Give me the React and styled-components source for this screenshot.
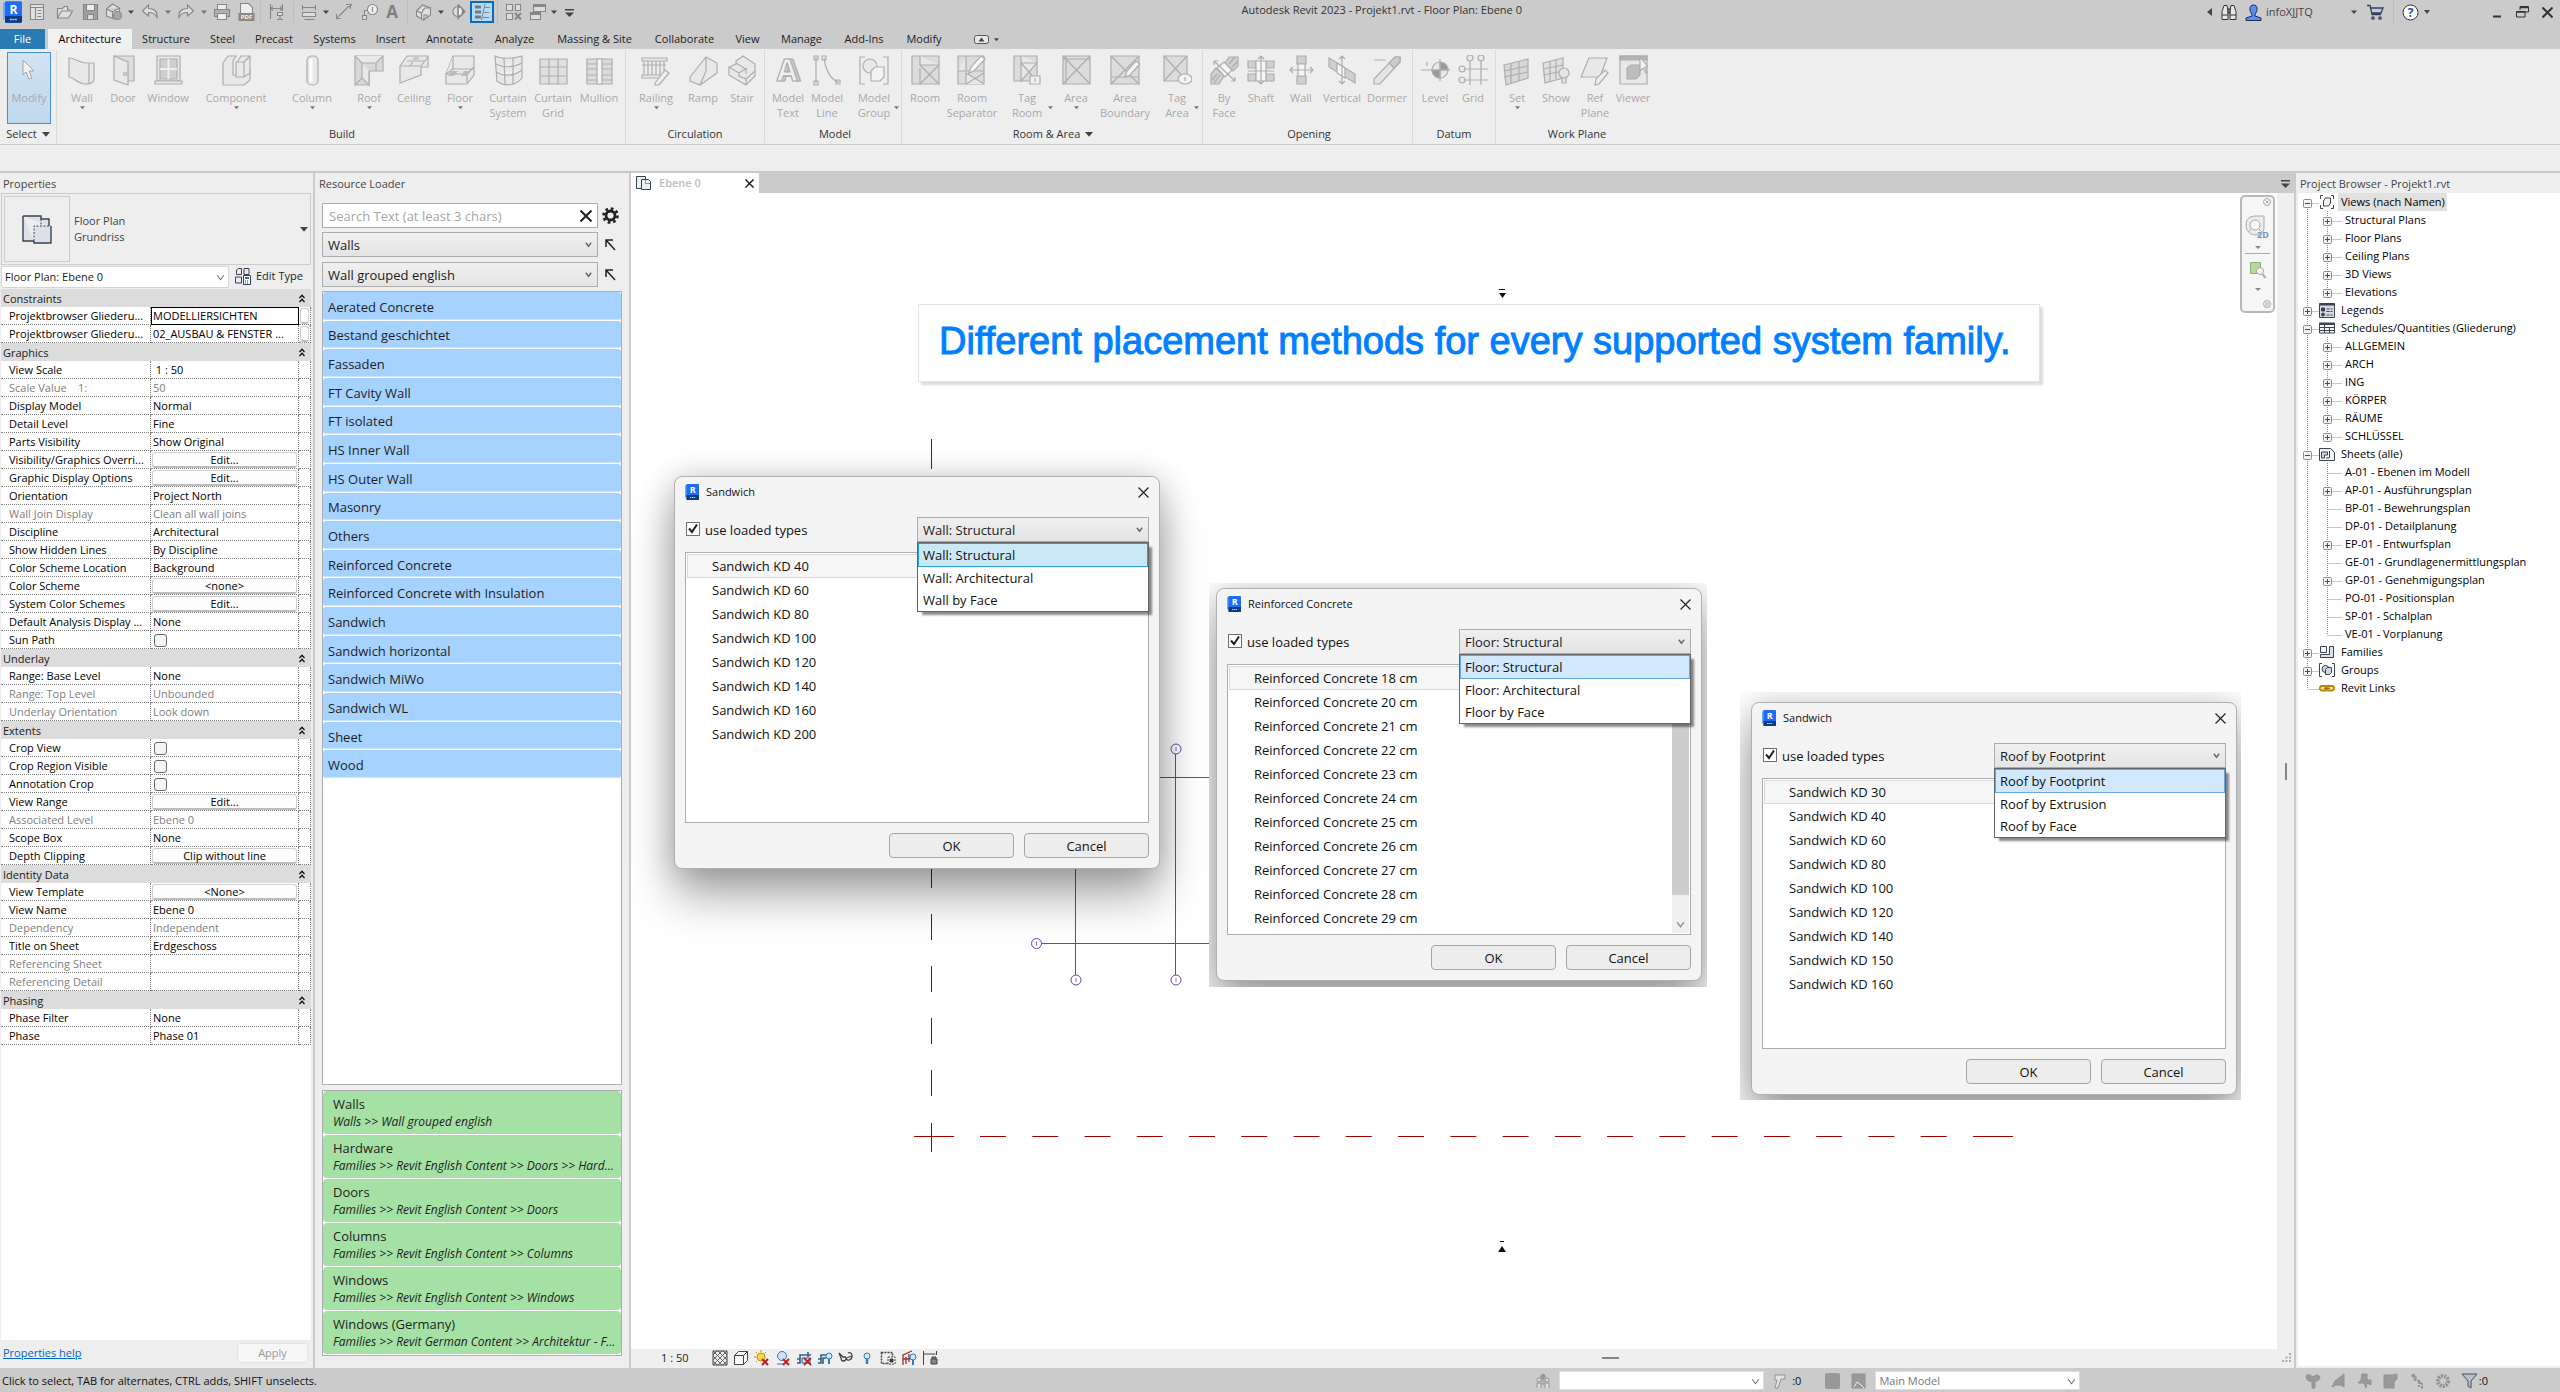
import React from "react";
import styled, { createGlobalStyle, css } from "styled-components";

const GlobalStyle = createGlobalStyle`
  * {
    box-sizing: border-box;
  }
  html, body, #root {
    height: 100%;
  }
  body {
    margin: 0;
    overflow: hidden;
    background: #eeeeee;
    color: #1e1e1e;
    font-family: "Open Sans", "Noto Sans", sans-serif;
    font-size: 11px;
    line-height: 16px;
  }
  button, input, select {
    font: inherit;
    color: inherit;
    margin: 0;
    padding: 0;
  }
  button {
    border: 0;
    background: none;
  }
  ul {
    list-style: none;
    margin: 0;
    padding: 0;
  }
  h1, h2, p {
    margin: 0;
    font-size: inherit;
    font-weight: normal;
  }
  svg {
    display: block;
    flex: none;
  }
`;

/* ---------- data ---------- */

const tabs = [
  ["Structure", 68], ["Steel", 45], ["Precast", 58], ["Systems", 63],
  ["Insert", 49], ["Annotate", 69], ["Analyze", 61], ["Massing & Site", 99],
  ["Collaborate", 81], ["View", 45], ["Manage", 63], ["Add-Ins", 62], ["Modify", 58],
];

const ribbonPanels = [
  {
    title: "Build", pad: 5,
    tools: [
      ["wall", "Wall", 40, "down"], ["door", "Door", 42], ["window", "Window", 48],
      ["component", "Component", 88, "down"], ["column", "Column", 64, "down"],
      ["roof", "Roof", 50, "down"], ["ceiling", "Ceiling", 40], ["floor", "Floor", 52, "down"],
      ["curtain", "Curtain System", 44], ["curtainGrid", "Curtain Grid", 46], ["mullion", "Mullion", 46],
    ],
    end: 3,
  },
  { title: "Circulation", pad: 5, tools: [["railing", "Railing", 50, "down"], ["ramp", "Ramp", 44], ["stair", "Stair", 34]], end: 5 },
  { title: "Model", pad: 4, tools: [["modelText", "Model Text", 38], ["modelLine", "Model Line", 40], ["modelGroup", "Model Group", 54, "side"]], end: 0 },
  {
    title: "Room & Area", pad: 3, menu: true,
    tools: [
      ["room", "Room", 40], ["roomSep", "Room Separator", 54], ["tagRoom", "Tag Room", 56, "side"],
      ["area", "Area", 42, "down"], ["areaBoundary", "Area Boundary", 56], ["tagArea", "Tag Area", 48, "side"],
    ],
    end: 1,
  },
  {
    title: "Opening", pad: 3,
    tools: [["byFace", "By Face", 36], ["shaft", "Shaft", 38], ["openWall", "Wall", 42], ["vertical", "Vertical", 40], ["dormer", "Dormer", 50]],
    end: 0,
  },
  { title: "Datum", pad: 3, tools: [["level", "Level", 38], ["grid", "Grid", 38]], end: 3 },
  { title: "Work Plane", pad: 4, last: true, tools: [["set", "Set", 34, "down"], ["show", "Show", 44], ["refPlane", "Ref Plane", 34], ["viewer", "Viewer", 42]], end: 3 },
];

const propertyGroups = [
  ["Constraints", [
    ["Projektbrowser Gliederu...", "MODELLIERSICHTEN", "focus"],
    ["Projektbrowser Gliederu...", "02_AUSBAU & FENSTER ...", "more"],
  ]],
  ["Graphics", [
    ["View Scale", "\u00a01 : 50"],
    ["Scale Value \u00a0 \u00a01:", "50", "off"],
    ["Display Model", "Normal"],
    ["Detail Level", "Fine"],
    ["Parts Visibility", "Show Original"],
    ["Visibility/Graphics Overri...", "Edit...", "button"],
    ["Graphic Display Options", "Edit...", "button"],
    ["Orientation", "Project North"],
    ["Wall Join Display", "Clean all wall joins", "off"],
    ["Discipline", "Architectural"],
    ["Show Hidden Lines", "By Discipline"],
    ["Color Scheme Location", "Background"],
    ["Color Scheme", "<none>", "button"],
    ["System Color Schemes", "Edit...", "button"],
    ["Default Analysis Display ...", "None"],
    ["Sun Path", "", "check"],
  ]],
  ["Underlay", [
    ["Range: Base Level", "None"],
    ["Range: Top Level", "Unbounded", "off"],
    ["Underlay Orientation", "Look down", "off"],
  ]],
  ["Extents", [
    ["Crop View", "", "check"],
    ["Crop Region Visible", "", "check"],
    ["Annotation Crop", "", "check"],
    ["View Range", "Edit...", "button"],
    ["Associated Level", "Ebene 0", "off"],
    ["Scope Box", "None"],
    ["Depth Clipping", "Clip without line", "button"],
  ]],
  ["Identity Data", [
    ["View Template", "<None>", "button"],
    ["View Name", "Ebene 0"],
    ["Dependency", "Independent", "off"],
    ["Title on Sheet", "Erdgeschoss"],
    ["Referencing Sheet", "", "off"],
    ["Referencing Detail", "", "off"],
  ]],
  ["Phasing", [
    ["Phase Filter", "None"],
    ["Phase", "Phase 01"],
  ]],
];

const wallGroups = [
  "Aerated Concrete", "Bestand geschichtet", "Fassaden", "FT Cavity Wall", "FT isolated",
  "HS Inner Wall", "HS Outer Wall", "Masonry", "Others", "Reinforced Concrete",
  "Reinforced Concrete with Insulation", "Sandwich", "Sandwich horizontal", "Sandwich MiWo",
  "Sandwich WL", "Sheet", "Wood",
];

const favourites = [
  ["Walls", "Walls >> Wall grouped english"],
  ["Hardware", "Families >> Revit English Content >> Doors >> Hard..."],
  ["Doors", "Families >> Revit English Content >> Doors"],
  ["Columns", "Families >> Revit English Content >> Columns"],
  ["Windows", "Families >> Revit English Content >> Windows"],
  ["Windows (Germany)", "Families >> Revit German Content >> Architektur - F..."],
];

const browserTree = [
  { label: "Views (nach Namen)", icon: "views", open: true, selected: true, items: ["+Structural Plans", "+Floor Plans", "+Ceiling Plans", "+3D Views", "+Elevations"] },
  { label: "Legends", icon: "legends" },
  { label: "Schedules/Quantities (Gliederung)", icon: "schedules", open: true, items: ["+ALLGEMEIN", "+ARCH", "+ING", "+KÖRPER", "+RÄUME", "+SCHLÜSSEL"] },
  {
    label: "Sheets (alle)", icon: "sheets", open: true,
    items: [
      "A-01 - Ebenen im Modell", "+AP-01 - Ausführungsplan", "BP-01 - Bewehrungsplan",
      "DP-01 - Detailplanung", "+EP-01 - Entwurfsplan", "GE-01 - Grundlagenermittlungsplan",
      "+GP-01 - Genehmigungsplan", "PO-01 - Positionsplan", "SP-01 - Schalplan", "VE-01 - Vorplanung",
    ],
  },
  { label: "Families", icon: "families" },
  { label: "Groups", icon: "groups" },
  { label: "Revit Links", icon: "links", leaf: true },
];

const sandwichTypes = (sizes) => sizes.map((s) => `Sandwich KD ${s}`);
const concreteTypes = [18, 20, 21, 22, 23, 24, 25, 26, 27, 28, 29].map((s) => `Reinforced Concrete ${s} cm`);

/* ---------- icons ---------- */

const Caret = ({ size = 6, color = "#444" }) => (
  <svg width={size} height={size} viewBox="0 0 6 6"><path d="M0 1.5h6L3 5z" fill={color} /></svg>
);

const Chevron = ({ size = 8, color = "#666", width = 1.4 }) => (
  <svg width={size} height={size} viewBox="0 0 8 8"><path d="M1 2l3 4 3-4" fill="none" stroke={color} strokeWidth={width} /></svg>
);

const Cross = ({ size = 11, width = 1.2, color = "#222" }) => (
  <svg width={size} height={size} viewBox="0 0 11 11"><path d="M.5.5l10 10M10.5.5l-10 10" stroke={color} strokeWidth={width} /></svg>
);

const RevitLogo = ({ width = 14, height = 16 }) => (
  <svg width={width} height={height} viewBox="0 0 14 16">
    <path d="M0 1.5L2 0v12L0 14z" fill="#6fa8ff" />
    <rect x="1.5" width="12.5" height="16" rx="1" fill="#1c6cf5" />
    <path d="M1.5 11H14v4.2a.8.8 0 0 1-.8.8H1.5z" fill="#0b3a86" />
    <text x="7.7" y="9.2" textAnchor="middle" fontSize="9" fontWeight="bold" fill="#fff">R</text>
    <path d="M5 13.5h5.5" stroke="#b9ccee" strokeWidth="1.2" strokeDasharray="1.4 .5" />
  </svg>
);

const ribbonArt = {
  wall: <path d="M2 3c6 0 10 5 18 5h7v17c-1 3-4 4-8 4C10 29 7 22 2 22zM22 8v21" />,
  door: <><path d="M6 1h20v25h-6" fill="#ddd" /><path d="M6 1l14 6v23L6 25z" /><circle cx="17" cy="19" r="1.5" /></>,
  window: <><path d="M4 1h23v25H4z" /><path d="M7 4h17v20H7z" fill="#cfcfcf" /><path d="M15.5 4v20M7 14h17" stroke="#eee" strokeWidth="2" /><path d="M2 26h27v3H2z" /></>,
  component: <><path d="M2 8l5-7h8l-3 5v14h10l7-5v10l-6 5H2z" /><path d="M16 7l4-6h9v17l-6 4h-8V7zM23 7v15M23 7l6-6M16 7h7" /></>,
  column: <><rect x="10" y="1" width="11" height="29" rx="4.5" /><path d="M14 4v23" stroke="#fff" strokeWidth="3" /></>,
  roof: <><path d="M1 1h28v15H15v14H1z" fill="#d8d8d8" /><path d="M1 1l7 7h14l7-7M8 8v15l7 7V16M8 23l-7 7M22 8v8" /></>,
  ceiling: <><path d="M1 11L8 1h21v11H22v8L1 28z" /><path d="M1 11h21l7-9M8 6h17M11 11l6-9" /><path d="M12 7h6l3-5h-6z" fill="#ccc" stroke="none" /></>,
  floor: <><path d="M1 19L8 1h21v19l-7 9H1z" /><path d="M1 19h21v10M8 1v13L1 19M22 19l7-7M8 14h20" /><path d="M6 16h7l-4 5H3zM16 21h6l4-5h-7z" fill="#bbb" stroke="none" /></>,
  curtain: <path d="M2 1c6 3 18 3 27 0v22c-6 8-18 9-25 3zM3 9c8 4 18 3 26-1M3 17c8 5 18 4 26-2M11 3l1 26M20 3v26" />,
  curtainGrid: <><path d="M2 4h27v25H2z" fill="#e0e0e0" /><path d="M2 12h27M2 21h27M11 4v25M20 4v25" /></>,
  mullion: <><path d="M3 4h25v25H3z" fill="#dcdcdc" /><path d="M13 4h5v25h-5z" fill="#f4f4f4" /><path d="M3 9h10M3 14h10M3 20h10M3 25h10M18 9h10M18 14h10M18 20h10M18 25h10" /></>,
  railing: <><path d="M1 3h25v3H1zM1 20h20v3H1zM3 6v14M7 6v14M11 6v14M15 6v14M19 6v14M23 6v10M1 10h24" /><path d="M14 28l10-13 4 3-10 12h-4z" fill="#eee" /></>,
  ramp: <path d="M2 22L18 2l11 6v10L12 30l-10-4zM18 2v14L12 30" />,
  stair: <path d="M2 12L9 9V6l7-5 12 8v12l-9 9L2 20zM2 12l10 6v3l7 3v6M9 8l10 6v5M12 18l8-5M19 24l9-8" />,
  modelText: <><text x="17" y="26" textAnchor="middle" fontSize="30" fontWeight="bold" fill="#cfcfcf">A</text><text x="14" y="26" textAnchor="middle" fontSize="30" fontWeight="bold" fill="#f0f0f0">A</text></>,
  modelLine: <path d="M4 2v26M2 1h4v4H2zM2 26h4v4H2zM12 3c2 14 8 23 15 24M10 1h4v4h-4zM24 25h4v4h-4z" fill="none" />,
  modelGroup: <><path d="M6 2H1v27h5M24 2h5v27h-5" fill="none" /><circle cx="11" cy="11" r="7" /><path d="M12 16l4-4h9v10l-4 4h-9z" fill="#f4f4f4" /></>,
  room: <><path d="M2 1h27v28H2z" fill="#dcdcdc" /><path d="M10 1v9h19M10 13v16M10 10l19 19M29 10L10 29" /></>,
  roomSep: <><path d="M1 1h26v28H1z" fill="#dcdcdc" /><path d="M9 1v15H1M9 16h18M9 29V18l18 11M9 29l18-11" /><path d="M12 18l2-6L24 1l4 3-11 12z" fill="#f6f6f6" /></>,
  tagRoom: <><path d="M2 1h23v25H2z" fill="#dcdcdc" /><path d="M9 1v7h16M9 8l16 18M25 8L9 26V8" /><path d="M18 21h10v8H18z" fill="#f2f2f2" /><path d="M23 23v4" /></>,
  area: <><path d="M2 1h27v28H2z" fill="#dcdcdc" /><path d="M2 1l27 28M29 1L2 29M5 1v28M2 4h27" /></>,
  areaBoundary: <><path d="M1 1h28v28H1z" fill="#dcdcdc" /><path d="M1 1l28 28M29 1L1 29M1 22h28" /><path d="M15 22l2-6L26 6l4 3-10 11z" fill="#f6f6f6" /></>,
  tagArea: <><path d="M2 1h23v25H2z" fill="#dcdcdc" /><path d="M2 1l23 25M25 1L2 26" /><ellipse cx="23" cy="24" rx="7" ry="5" fill="#f2f2f2" /><path d="M23 22v4" /></>,
  byFace: <><path d="M2 29V19l5-6 8 8-5 8zM16 8l4-6h9v9l-5 5z" fill="#d0d0d0" /><path d="M8 13l7-6 8 8-7 7z" fill="#f6f6f6" /><path d="M5 6l21 20M5 6h4M5 6v4M26 26h-4M26 26v-4M3 25l5-6M5 28l6-8M20 9l6-7M23 12l6-6" /></>,
  shaft: <><path d="M2 6h8v7H2zM20 6h8v7h-8zM2 19h8v7H2zM20 19h8v7h-8z" fill="#d0d0d0" /><path d="M10 6h10v20H10z" fill="#f6f6f6" /><path d="M15 1v28M12 4l3-3 3 3M12 26l3 3 3-3M2 16h26" /></>,
  openWall: <><path d="M11 1h9v8h-9zM11 21h9v8h-9z" fill="#d0d0d0" /><path d="M12 9h7v12h-7z" fill="#f6f6f6" /><path d="M4 15h23M7 12l-3 3 3 3M24 12l3 3-3 3" /></>,
  vertical: <><path d="M2 3l26 16v9L2 12z" fill="#d0d0d0" /><path d="M10 8l8 5v10l-8-5z" fill="#f6f6f6" /><path d="M15 1v28M12 4l3-3 3 3M12 26l3 3 3-3" /></>,
  dormer: <><path d="M2 29V24L23 2h5v5L8 29z" fill="#e4e4e4" /><path d="M17 8l6-6h5v5l-6 6zM2 5h12" fill="#ccc" /></>,
  level: <><circle cx="20" cy="15" r="8" /><path d="M20 7v8h8a8 8 0 0 0-8-8zM20 15v8a8 8 0 0 1-8-8z" fill="#9a9a9a" /><path d="M1 15h29M20 4v22M7 7v4" /></>,
  grid: <><path d="M12 5v25M23 5v25M6 14h24M6 25h24" /><circle cx="12" cy="3" r="3" /><circle cx="23" cy="3" r="3" /><circle cx="4" cy="14" r="3" /><circle cx="4" cy="25" r="3" /></>,
  set: <><path d="M2 10L26 4v19L4 30z" fill="#d8d8d8" /><path d="M2 16l24-5M2 22l24-5M9 8v20M17 6v20" /></>,
  show: <><path d="M2 8l20-5v20L4 28z" fill="#e0e0e0" /><path d="M2 14l20-4M2 20l20-4M9 7v19M15 5v19" /><circle cx="23" cy="18" r="5" fill="#e6e6e6" /><path d="M21 23h4v5h-4z" /></>,
  refPlane: <><path d="M1 22L9 3h18l-7 19z" /><path d="M15 30l1-6 9-9 3 3-9 11z" fill="#eee" /></>,
  viewer: <><path d="M2 1h27v28H2z" /><path d="M2 1h27v4H2z" fill="#b5b5b5" /><path d="M9 13l4-3h9v10l-4 4H9z" fill="#bdbdbd" /><path d="M22 2v14l3-3 3 5 1-1-2-5h3z" fill="#f6f6f6" /></>,
};

const RibbonIcon = ({ name }) => (
  <svg width="30" height="31" viewBox="0 0 30 31" fill="#e8e8e8" stroke="#adadad" strokeWidth="1.2">{ribbonArt[name]}</svg>
);

const quickArt = {
  ui: <><path d="M2.5 1.5h13v15h-13z" fill="#e2e2e2" /><path d="M2.5 4.5h13M7.5 4.5v12M9.5 7.5h4M9.5 10.5h4M9.5 13.5h4" /></>,
  open: <path d="M1.5 15V5.5h5l2-2h3v3h2M1.5 15l4-7h11l-4 7z" />,
  save: <><path d="M2.5 1.5h14v15h-14z" fill="#a0a0a0" /><path d="M5.5 1.5h8v6h-8z" fill="#eee" /><path d="M6.5 11.5h6v5h-6z" fill="#ddd" /></>,
  sync: <><path d="M1.5 6l6-5 7 4v7l-5 4-8-3zM1.5 6l6 3 7-4M7.5 9v7" /><circle cx="12.5" cy="12.5" r="4" fill="#a8a8a8" /></>,
  undo: <path d="M1.5 8l6-6v3.5c6 0 9 3 8.5 9-2-4-4-5-8.5-5V13z" />,
  redo: <path d="M16.5 8l-6-6v3.5c-6 0-9 3-8.5 9 2-4 4-5 8.5-5V13z" />,
  print: <><path d="M4.5 1.5h9v5h-9z" fill="#eee" /><path d="M1.5 6.5h15v7h-15z" fill="#b0b0b0" /><path d="M4.5 10.5h9v6h-9z" fill="#eee" /></>,
  pdf: <><path d="M3.5.5h8l4 4v13h-12z" fill="#eee" /><path d="M2 10.5h15v7H2z" fill="#8c8c8c" /><text x="9.5" y="16" textAnchor="middle" fontSize="6" fontWeight="bold" fill="#f4f4f4" stroke="none">PDF</text></>,
  align: <path d="M2.5 1v15M14.5 1v7M2.5 5.5h12M5 3.5l-2.5 2L5 7.5M12 3.5l2.5 2L12 7.5M9.5 9.5h5v3h-5zM12 12.5v4M9 16.5h6" />,
  measure: <><path d="M2.5 9.5h13v4h-13z" /><path d="M2.5 2v5M15.5 2v5M2.5 4.5h13M4.5 16.5h10" /></>,
  dim: <path d="M3 14L14 3M1.5 11v4.5H6M11 1.5h4.5V6M1 16l3-3M14 4l3-3" />,
  tag: <><circle cx="12.5" cy="6.5" r="5" fill="#eee" /><path d="M12.5 4v5M7.5 7.5h-3v5M2.5 12.5h4v4h-4z" /></>,
  text: <text x="9" y="15" textAnchor="middle" fontSize="17" fontWeight="bold" fill="#808080" stroke="none">A</text>,
  home: <><path d="M1.5 8l6-6 8 3v7l-7 5-7-4z" /><path d="M1.5 8l5 2 3-5 6 0M6.5 10v6M9 16v-4h3v3" fill="none" /></>,
  section: <><circle cx="9" cy="8.5" r="5" /><path d="M9 1.5l7 7-7 7" fill="#777" /><path d="M9 4a4.5 4.5 0 0 1 0 9z" fill="#eee" /><path d="M9 1.5v15" /></>,
  thin: <><path d="M2 4h6M2 9h6M2 14h6" strokeWidth="3" stroke="#6f7c86" /><path d="M12 1L8.5 17M12 4.5h5M11 9.5h5M10 14.5h6" /></>,
  hidden: <><path d="M1.5 1.5h6v6h-6zM10.5 1.5h5v6h-5zM1.5 10.5h6v6h-6z" /><path d="M10 10l6 6.5M16 10l-6 6.5" strokeWidth="2" /></>,
  windows: <><path d="M4.5 1.5h12v7h-12zM1.5 9.5h10v7h-10z" fill="#ddd" /><path d="M4.5 3h12M1.5 11h10" strokeWidth="2" /></>,
};

const QuickIcon = ({ name }) => (
  <svg width="18" height="18" viewBox="0 0 18 18" fill="#dedede" stroke="#878787" strokeWidth="1.1">{quickArt[name]}</svg>
);

const BarCaret = () => (
  <svg width="9" height="9" viewBox="0 0 9 9"><path d="M0 1h9v1.5H0zM0 4.5h9L4.5 9z" fill="#444" /></svg>
);

const SheetsIcon = ({ size = 30 }) => (
  <svg width={size} height={size} viewBox="0 0 30 30" stroke="#3b4252" fill="#dde0e6">
    <path d="M1 2h18v3h8v7M1 2v25h11" strokeWidth="1.4" />
    <path d="M12 12h17v17H12z" stroke="none" />
    <path d="M19 5v7M12 27V12h17" strokeDasharray="2 1.5" fill="none" />
    <path d="M29 12v17H12v-2" strokeWidth="1.4" fill="none" />
  </svg>
);

const SmallSheetsIcon = () => (
  <svg width="16" height="16" viewBox="0 0 16 16" stroke="#3b4252" fill="#eceef2">
    <path d="M.5 1.5h9v12h-9z" />
    <path d="M5.5 4.5h7l2 2v8h-9z" />
    <path d="M9.5 4.5v4h5" strokeDasharray="1 1" fill="none" />
  </svg>
);

const treeArt = {
  views: <><path d="M4 1.5H1.5V5M12 1.5h2.5V5M4 14.5H1.5V11M12 14.5h2.5V11" /><path d="M4.5 7l2-3h5v5l-2 3h-5z" fill="#f4f4f4" /></>,
  legends: <><path d="M.5 1.5h15v14H.5z" fill="#d5dbe3" /><path d="M.5 2.5h15" strokeWidth="2" /><path d="M2.5 6h3v3h-3z" fill="#3b4252" /><circle cx="4" cy="12.5" r="1.5" fill="#3b4252" /><path d="M7.5 7h6M7.5 9.5h6M7.5 13h6" strokeDasharray="3 1" /></>,
  schedules: <><path d="M.5 3h15v10H.5z" fill="#f4f4f4" /><path d="M.5 4h15" strokeWidth="2" /><path d="M.5 7.5h15M.5 10.5h15M5.5 4v9M10.5 7v6" /></>,
  sheets: <><path d="M.5 2.5h11l4 4v8H.5z" fill="#f4f4f4" /><path d="M2.5 6h6v3h-3v3h-3zM10.5 5v7M7 12h3" fill="#cfd5de" /></>,
  families: <><path d="M1.5 2.5h6v6h-6z" fill="#f4f4f4" /><path d="M10.5 2.5h4v11h-13v-3h9z" fill="#dfe3e8" /></>,
  groups: <><path d="M3 1.5H.5v13H3M13 1.5h2.5v13H13" /><circle cx="6.5" cy="7" r="3.5" fill="#cfd5de" /><path d="M6.5 7.5l2-2h4v5l-2 2h-4z" fill="#cfd5de" /></>,
  links: <><rect x=".8" y="6" width="8" height="4.5" rx="2.2" stroke="#b8860b" strokeWidth="1.8" fill="#ffe27a" /><rect x="7.2" y="6" width="8" height="4.5" rx="2.2" stroke="#b8860b" strokeWidth="1.8" fill="#ffe27a" /><path d="M5 8.2h6" stroke="#6d5200" /></>,
};

const viewArt = {
  detail: <><path d="M1 1h14v14H1z" fill="#eee" /><path d="M1 5l4-4M1 10l9-9M1 15L15 1M6 15l9-9M11 15l4-4M1 11l4 4M1 6l9 9M1 1l14 14M6 1l9 9M11 1l4 4" strokeWidth=".8" /></>,
  cube: <path d="M1.5 5.5l4-4h9v9l-4 4h-9zM1.5 5.5h9v9M10.5 5.5l4-4" fill="#fafafa" />,
  sun: <><circle cx="7" cy="7" r="4" fill="#ffd84a" stroke="#c49300" /><path d="M7 0v2M0 7h2M2 2l1 1M12 2l-1 1M2 12l1-1" stroke="#c49300" /><path d="M8 9l6 6M14 9l-6 6" stroke="#c02020" strokeWidth="2" /></>,
  shadow: <><circle cx="7" cy="6" r="4.5" fill="#cfe2f5" stroke="#3f76ac" /><path d="M2 14h6" stroke="#3f76ac" /><path d="M8 9l6 6M14 9l-6 6" stroke="#c02020" strokeWidth="2" /></>,
  crop: <><path d="M1 13h3V5h11M1 9h3M12 2v5" stroke="#2f5f92" strokeWidth="1.6" fill="none" /><path d="M6 8h8v5H6z" fill="#cfe2f5" stroke="#2f5f92" /><path d="M8 8l7 7M15 8l-7 7" stroke="#c02020" strokeWidth="1.8" /></>,
  cropRegion: <><path d="M1 13h3V5h5M6 14V8h3M1 9h3" stroke="#2f5f92" strokeWidth="1.6" fill="none" /><circle cx="12" cy="6" r="3" fill="#cfe8ff" stroke="#2f7fc0" /><path d="M12 9v5" stroke="#2f7fc0" strokeWidth="2" /></>,
  glasses: <><path d="M1 3l2 5c0 4 5 4 5 0M8 8c1 4 6 2 6-2 0-3-2-4-4-3M1 3l4 4h3M14 6l-6 2" fill="none" strokeWidth="1.3" /></>,
  bulb: <><circle cx="8" cy="6" r="3" fill="#cfe8ff" stroke="#2f7fc0" /><path d="M8 9v5" stroke="#2f7fc0" strokeWidth="2.5" /></>,
  template: <><path d="M1.5 2.5h11v11h-11z" strokeDasharray="2 1" fill="#eee" strokeWidth="1.5" /><path d="M8 7h7v7H8z" fill="#fff" strokeDasharray="2 1" /><path d="M10 9h3v3h-3z" fill="#333" /></>,
  analytic: <><path d="M2 15V5l9-4M5 14V7M8 12V4M2 9h7" stroke="#a03030" fill="none" strokeWidth="1.3" /><circle cx="12" cy="7" r="3" fill="#cfe8ff" stroke="#2f7fc0" /><path d="M12 10v5" stroke="#2f7fc0" strokeWidth="2" /></>,
  constraints: <><path d="M1.5 1v14M1.5 4h12M14.5 1v4" fill="none" /><path d="M9 9h6v5H9zM10 9V7h4v2" fill="#888" /></>,
};

const statusArt = {
  people: <><circle cx="8" cy="3.5" r="2.2" /><circle cx="4" cy="7" r="2" fill="#ddd" /><circle cx="12" cy="7" r="2" fill="#ddd" /><path d="M2 15V10h4v5M10 15v-5h4v5M7 7h2v4H7z" fill="#ddd" /></>,
  pick: <path d="M3 2h10v4H9l-3 9H3l2-8H3z" fill="#e4e4e4" />,
  option: <rect x="0" y="0" width="15" height="16" rx="2" stroke="none" />,
  optionPick: <><path d="M1 1h13v14H1z" /><path d="M3 14l3-5 3 2 4 4" stroke="#eee" fill="none" /></>,
  link: <path d="M1 3c3-3 5 0 7 1 2-2 5-3 7 0-1 5-4 4-5 4v7H7V8C4 9 2 8 1 3z" />,
  underlay: <path d="M1 14l3-6 9-7v13l-3-2H5z" />,
  pinned: <path d="M5 1h5v6h4v5l-4-2-1 5-2-5H1l3-3z" />,
  face: <path d="M1 2h9l4-1v5l-3 3v6H1z" />,
  drag: <path d="M3 2l3 5 4 1 3 3v5M3 2h3l1 4M10 8v6" fill="none" strokeWidth="2" strokeDasharray="3 1" />,
  gear: <circle cx="8" cy="8" r="5" fill="none" strokeWidth="4" strokeDasharray="2 1" />,
};

/* ---------- title bar ---------- */

const Shell = styled.div`
  display: flex;
  flex-direction: column;
  height: 100vh;
`;

const TitleBar = styled.header`
  display: flex;
  height: 29px;
  background: #cbcbcb;
`;

const QuickAccess = styled.div`
  display: flex;
  align-items: center;
  flex: 1243 1 0;
  height: 24px;
  padding-left: 3px;
`;

const QuickButton = styled.button`
  display: flex;
  align-items: center;
  justify-content: center;
  width: ${(p) => p.$w || 24}px;
  height: 22px;
  ${(p) => p.$active && css`
    background: #b5daf7;
    outline: 2px solid #0a6cbf;
    outline-offset: -2px;
  `}
`;

const QuickDivider = styled.span`
  width: 1px;
  height: 22px;
  margin: 0 ${(p) => p.$gap || 3}px;
  background: #bdbdbd;
`;

const DocTitle = styled.h1`
  width: 292px;
  padding-top: 2px;
  white-space: nowrap;
  color: #333;
`;

const UserArea = styled.div`
  display: flex;
  align-items: center;
  justify-content: flex-end;
  flex: 1025 1 0;
  height: 24px;
  padding-right: 5px;
  color: #444;
`;

const UserItem = styled.button`
  display: flex;
  align-items: center;
  justify-content: ${(p) => p.$align || "flex-start"};
  gap: 4px;
  width: ${(p) => p.$w}px;
`;

const TabRow = styled.nav`
  display: flex;
  height: 20px;
  background: #cbcbcb;
`;

const Tab = styled.button`
  width: ${(p) => p.$w}px;
  height: 20px;
  white-space: nowrap;
  color: #222;
  ${(p) => p.$kind === "file" && css`
    background: #2a7ab3;
    color: #fff;
    margin-right: 3px;
  `}
  ${(p) => p.$kind === "active" && css`
    background: #f1f1f1;
    color: #000;
  `}
`;

const RibbonToggle = styled.button`
  display: flex;
  align-items: center;
  gap: 5px;
  margin-left: 21px;
`;

/* ---------- ribbon ---------- */

const Ribbon = styled.section`
  display: flex;
  height: 96px;
  padding-top: 1px;
  border-bottom: 1px solid #c8c8c8;
  background: #eeeeee;
`;

const RibbonPanel = styled.div`
  display: flex;
  flex-direction: column;
  justify-content: space-between;
  padding: 2px ${(p) => p.$end || 0}px 1px ${(p) => p.$pad || 0}px;
  border-right: ${(p) => (p.$last ? 0 : 1)}px solid #dadada;
  margin-bottom: 1px;
`;

const Tools = styled.div`
  display: flex;
`;

const Tool = styled.button`
  position: relative;
  display: flex;
  flex-direction: column;
  align-items: center;
  width: ${(p) => p.$w}px;
  height: 73px;
  padding-top: 3px;
  color: #a9a9a9;
  line-height: 15px;
`;

const ToolLabel = styled.span`
  width: min-content;
  margin-top: 4px;
`;

const SideCaret = styled.span`
  position: absolute;
  right: 2px;
  top: 53px;
`;

const ModifyButton = styled(Tool)`
  margin: 0 5px 0 7px;
  height: 72px;
  background: linear-gradient(#d3e3f2, #bfd8ee);
  border: 1px solid #4a90d0;
`;

const PanelTitle = styled.div`
  display: flex;
  align-items: center;
  justify-content: center;
  gap: 5px;
  color: #333;
`;

const OptionsBar = styled.div`
  height: 28px;
  border-bottom: 2px solid #c8c8c8;
`;

/* ---------- work area ---------- */

const Workspace = styled.main`
  display: flex;
  flex: 1;
  min-height: 0;
`;

const Palette = styled.aside`
  display: flex;
  flex-direction: column;
  width: ${(p) => p.$w}px;
  border-right: 2px solid #cbcbcb;
  background: #eeeeee;
`;

const PaletteTitle = styled.h2`
  height: 20px;
  line-height: 21px;
  padding-left: ${(p) => p.$pad || 3}px;
  color: #444;
`;

const TypeSelector = styled.button`
  display: flex;
  align-items: center;
  margin: 0 2px 0 1px;
  height: 72px;
  padding: 2px;
  border: 1px solid #cccccc;
  text-align: left;
  color: #444;
`;

const TypePreview = styled.span`
  display: flex;
  align-items: center;
  justify-content: center;
  width: 66px;
  height: 66px;
  margin-right: 4px;
  border: 1px solid #cccccc;
`;

const TypeName = styled.span`
  flex: 1;
`;

const InstanceRow = styled.div`
  display: flex;
  align-items: center;
  height: 24px;
  padding-left: 1px;
`;

const SelectWrap = styled.label`
  position: relative;
  display: block;
  width: ${(p) => (p.$w ? `${p.$w}px` : "auto")};
  ${(p) => p.$grow && "flex: 1;"}
`;

const SelectBox = styled.select`
  appearance: none;
  display: block;
  width: 100%;
  height: 25px;
  padding: 0 20px 0 5px;
  border: 1px solid #acacac;
  border-radius: 0;
  background: linear-gradient(#f0f0f0, #e4e4e4);
  color: #1a1a1a;
  font-size: 13px;
  ${(p) => p.$kind === "plain" && css`
    height: 22px;
    padding-left: 3px;
    border-color: #d5d5d5;
    border-radius: 2px;
    background: #ffffff;
    font-size: 11px;
  `}
  ${(p) => p.$kind === "status" && css`
    height: 19px;
    padding-left: 3px;
    border-color: #dddddd;
    background: #ffffff;
    color: #777;
    font-size: 11px;
  `}
`;

const SelectMark = styled.span`
  position: absolute;
  right: ${(p) => p.$right || 6}px;
  top: 50%;
  margin-top: -4px;
  pointer-events: none;
`;

const EditType = styled.button`
  display: flex;
  align-items: center;
  gap: 5px;
  margin-left: 6px;
  height: 22px;
  align-self: flex-start;
`;

const PropertyScroll = styled.div`
  flex: 1;
  min-height: 0;
  margin: 0 2px 0 1px;
  background: #fff;
`;

const PropertyTable = styled.table`
  width: 100%;
  table-layout: fixed;
  border-collapse: separate;
  border-spacing: 0;
  line-height: 15px;
  color: #000;
`;

const GroupHead = styled.th`
  height: 18px;
  padding: 0 6px 0 2px;
  background: #dcdcdc;
  font-weight: normal;
  text-align: left;
  color: #1a1a1a;

  div {
    display: flex;
    align-items: center;
    justify-content: space-between;
  }
`;

const Cell = styled.td`
  height: 18px;
  padding: 0 0 0 ${(p) => (p.$label ? 8 : 2)}px;
  border-right: 1px dotted #808080;
  border-bottom: 1px dotted #808080;
  white-space: nowrap;
  overflow: hidden;
  color: ${(p) => (p.$off ? "#808080" : "#000")};
  ${(p) => p.$tight && "padding: 0 1px;"}
  ${(p) => p.$focus && css`
    outline: 1px solid #000;
    outline-offset: -1px;
  `}
`;

const CellButton = styled.button`
  display: block;
  width: 100%;
  height: 16px;
  line-height: 13px;
  border: 1px solid #d0d0d0;
  border-bottom: 2px solid #bdbdbd;
  border-radius: 3px;
  background: #fdfdfd;
`;

const CellCheck = styled.input`
  appearance: none;
  display: block;
  width: 13px;
  height: 13px;
  margin: 2px 1px 0;
  border: 1px solid #6a6a6a;
  border-radius: 3px;
  background: #f5f5f5;
`;

const PaletteFooter = styled.div`
  display: flex;
  align-items: center;
  justify-content: space-between;
  height: 28px;
  padding: 0 5px 2px 3px;

  a {
    color: #0066cc;
  }
`;

const ApplyButton = styled.button`
  width: 71px;
  height: 20px;
  border: 1px solid #e4e4e4;
  border-radius: 3px;
  background: #f6f6f6;
  color: #9a9a9a;
`;

/* ---------- resource loader ---------- */

const LoaderBody = styled.div`
  display: flex;
  flex-direction: column;
  flex: 1;
  padding: 10px 7px 12px;
  font-size: 13px;
  line-height: 18px;
`;

const LoaderRow = styled.div`
  display: flex;
  align-items: center;
  height: 25px;
  margin-bottom: ${(p) => p.$gap || 4}px;
`;

const SearchBox = styled.label`
  display: flex;
  align-items: center;
  flex: 1;
  height: 25px;
  padding: 0 5px 0 6px;
  border: 1px solid #acacac;
  background: #fff;

  input {
    flex: 1;
    min-width: 0;
    border: 0;
    outline: 0;
    background: none;
  }
  input::placeholder {
    color: #a5a5a5;
    opacity: 1;
  }
`;

const SideIcon = styled.button`
  display: flex;
  justify-content: center;
  width: 24px;
`;

const GroupBox = styled.div`
  flex: 1;
  border: 1px solid #abadb3;
  background: #fff;
`;

const GroupList = styled.ul`
  display: grid;
  grid-auto-rows: 1fr;
  height: 487px;
`;

const GroupItem = styled.li`
  display: flex;
  align-items: center;
  padding: 2px 5px 0;
  border-bottom: 1px solid #ffffff;
  border-radius: 3px;
  background: #a6d2ff;
  box-shadow: inset 0 -1px #c8e3ff;
`;

const FavouriteList = styled.ul`
  margin-top: 5px;
  border: 1px solid #abadb3;
  background: #fff;
`;

const FavouriteItem = styled.li`
  height: 44px;
  padding: 4px 1px 0 10px;
  border-bottom: 1px solid #fff;
  border-radius: 4px;
  background: #a5e1a5;

  p {
    white-space: nowrap;
    font-size: 12px;
    font-style: italic;
  }
`;

/* ---------- drawing view ---------- */

const ViewColumn = styled.section`
  display: flex;
  flex-direction: column;
  flex: 1;
  min-width: 0;
`;

const ViewTabs = styled.div`
  display: flex;
  align-items: center;
  justify-content: space-between;
  height: 20px;
  padding-right: 4px;
  background: #cbcbcb;
`;

const ViewTab = styled.div`
  display: flex;
  align-items: center;
  width: 128px;
  height: 20px;
  padding: 0 5px;
  gap: 7px;
  background: #fff;
  color: #c0c0c0;
  font-weight: 600;

  span {
    flex: 1;
  }
`;

const ViewBody = styled.div`
  display: flex;
  flex: 1;
  min-height: 0;
`;

const Canvas = styled.div`
  position: relative;
  flex: 1;
  overflow: hidden;
  background: #fff;
`;

const Drawing = styled.svg`
  position: absolute;
  inset: 0;
`;

const Banner = styled.p`
  position: absolute;
  left: 287px;
  top: 111px;
  padding: 14px 28px 18px 20px;
  border: 1px solid #e4e4e4;
  background: #fff;
  box-shadow: 3px 3px 2px #dddddd;
  color: #0080ff;
  font-family: "Liberation Sans", Arial, sans-serif;
  font-size: 38px;
  line-height: 44px;
  white-space: nowrap;
  -webkit-text-stroke: 1px #0080ff;
`;

const NavigationBar = styled.div`
  position: absolute;
  right: 2px;
  top: 2px;
  width: 35px;
  border: 2px solid #b8b8b8;
  border-radius: 5px;
  background: #f6f6f6;
`;

const VerticalScroll = styled.div`
  display: flex;
  align-items: center;
  justify-content: center;
  width: 17px;
  background: #efefef;

  span {
    width: 2px;
    height: 17px;
    background: #858585;
  }
`;

const ViewControls = styled.div`
  display: flex;
  align-items: center;
  height: 19px;
  padding: 0 3px 2px 30px;
  background: #efefef;
`;

const ScaleButton = styled.button`
  width: 51px;
  text-align: left;
`;

const ViewIcons = styled.div`
  display: flex;
  gap: 5px;
`;

const HorizontalScroll = styled.div`
  display: flex;
  justify-content: center;
  flex: 1;

  span {
    width: 17px;
    height: 2px;
    background: #858585;
  }
`;

/* ---------- dialogs ---------- */

const DialogFrame = styled.div`
  position: absolute;
  left: ${(p) => p.$x}px;
  top: ${(p) => p.$y}px;
  ${(p) => p.$pad && css`
    padding: ${p.$pad};
    overflow: hidden;
    background: #fff;
  `}
`;

const DialogBox = styled.form`
  display: flex;
  flex-direction: column;
  width: 486px;
  height: 393px;
  padding: 0 10px 10px;
  border: 1px solid #b0b0b0;
  border-radius: 8px;
  background: #f4f4f4;
  box-shadow: 0 28px 46px rgba(0, 0, 0, 0.32), 0 2px 32px rgba(0, 0, 0, 0.2);
  font-size: 13px;
  line-height: 18px;
  color: #111;
`;

const DialogHead = styled.div`
  display: flex;
  align-items: center;
  height: 30px;
  gap: 7px;
  font-size: 11px;

  h2 {
    flex: 1;
  }
`;

const DialogOptions = styled.div`
  display: flex;
  justify-content: space-between;
  margin: 10px 0 9px;
`;

const CheckLabel = styled.label`
  display: flex;
  align-items: center;
  gap: 5px;
  height: 26px;
`;

const CheckWrap = styled.span`
  position: relative;
  display: block;
  width: 14px;
  height: 14px;
  margin: -2px 0 0 1px;

  input {
    appearance: none;
    display: block;
    width: 14px;
    height: 14px;
    border: 1px solid #707070;
    background: #fff;
  }
  svg {
    position: absolute;
    left: 2px;
    top: 2px;
    pointer-events: none;
  }
`;

const Popup = styled.ul`
  position: absolute;
  z-index: 1;
  left: 0;
  right: 0;
  top: 25px;
  border: 1px solid #646464;
  background: #fff;
  box-shadow: 4px 4px 2px -1px rgba(0, 0, 0, 0.45);
`;

const PopupItem = styled.li`
  height: 22px;
  padding: 2px 5px;
  ${(p) => p.$active && css`
    height: 24px;
    padding: 2px 4px;
    border: 1px solid ${p.$active === "cyan" ? "#26a0da" : "#66a7e8"};
    background: ${p.$active === "cyan" ? "#cbe8f6" : "#d1e8ff"};
  `}
`;

const TypeBox = styled.div`
  display: flex;
  flex: 1;
  min-height: 0;
  padding: 1px;
  border: 1px solid #abadb3;
  background: #fff;
`;

const TypeList = styled.ul`
  flex: 1;
`;

const TypeItem = styled.li`
  height: 24px;
  padding: 2px 24px;
  border: 1px solid transparent;
  ${(p) => p.$first && css`
    border-color: #dadada;
    background: #f6f6f6;
  `}
`;

const ListScroll = styled.div`
  display: flex;
  flex-direction: column;
  width: 17px;
  background: #f0f0f0;
  align-items: center;

  span {
    width: 17px;
    flex: 1;
    background: #cdcdcd;
    margin: 17px 0 25px;
  }
  svg {
    margin-bottom: 4px;
  }
`;

const DialogButtons = styled.div`
  display: flex;
  justify-content: flex-end;
  gap: 10px;
  margin-top: 10px;
`;

const DialogButton = styled.button`
  width: 125px;
  height: 25px;
  border: 1px solid #a5a5a5;
  border-radius: 4px;
  background: #ededed;
`;

/* ---------- project browser ---------- */

const Browser = styled.aside`
  display: flex;
  flex-direction: column;
  width: 266px;
  border-left: 2px solid #cbcbcb;
`;

const Tree = styled.ul`
  flex: 1;
  margin: 0 0 2px 2px;
  background: #fff;
  color: #000;
`;

const TreeRow = styled.div`
  display: flex;
  align-items: center;
  height: 18px;
`;

const TreeLabel = styled.span`
  height: 18px;
  line-height: 18px;
  padding: 0 2px 0 3px;
  margin-left: ${(p) => (p.$root ? 3 : 0)}px;
  white-space: nowrap;
  background: ${(p) => (p.$selected ? "#e1e1e1" : "none")};
`;

/* ---------- status bar ---------- */

const StatusBar = styled.footer`
  display: flex;
  align-items: center;
  height: 24px;
  padding: 1px 72px 0 2px;
  background: #cbcbcb;
  color: #111;
`;

const StatusText = styled.span`
  flex: 1537 1 0;
`;

const StatusGroup = styled.div`
  display: flex;
  align-items: center;
  gap: ${(p) => p.$gap || 8}px;
  margin-left: ${(p) => p.$before || 0}px;
`;

const StatusSpace = styled.span`
  flex: 225 1 0;
`;

const Expander = ({ open }) => (
  <>
    <rect x=".5" y=".5" width="8" height="8" rx="1" fill="#f3f3f3" stroke="#8c8c8c" />
    <path d={open ? "M2 4.5h5" : "M2 4.5h5M4.5 2v5"} stroke="#2b4c9b" />
  </>
);

const RootGutter = ({ open, leaf, first, last }) => (
  <svg width="21" height="18" viewBox="0 0 21 18">
    <path d={`M9.5 ${first ? 10 : 0}V${last ? 10 : 18}M9.5 10.5H21`} stroke="#8c8c8c" strokeDasharray="1 1" />
    {!leaf && <g transform="translate(5 6)"><Expander open={open} /></g>}
  </svg>
);

const ChildGutter = ({ expandable, last }) => (
  <svg width="44" height="18" viewBox="0 0 44 18">
    <path d={`M9.5 0V18M29.5 0V${last ? 10 : 18}M29.5 10.5H44`} stroke="#8c8c8c" strokeDasharray="1 1" />
    {expandable && <g transform="translate(25 6)"><Expander /></g>}
  </svg>
);

const SelectField = ({ label, value, w, grow, kind, right, children }) => (
  <SelectWrap $w={w} $grow={grow}>
    <SelectBox aria-label={label} defaultValue={value} $kind={kind}>
      <option>{value}</option>
    </SelectBox>
    <SelectMark $right={right}><Chevron size={kind ? 9 : 7} width={kind ? 0.9 : 1.6} /></SelectMark>
    {children}
  </SelectWrap>
);

const Dialog = ({ title, choices, accent, types, scroll }) => (
  <DialogBox onSubmit={(e) => e.preventDefault()}>
    <DialogHead>
      <RevitLogo />
      <h2>{title}</h2>
      <button type="button" aria-label="Close"><Cross /></button>
    </DialogHead>
    <DialogOptions>
      <CheckLabel>
        <CheckWrap>
          <input type="checkbox" defaultChecked />
          <svg width="10" height="10" viewBox="0 0 10 10"><path d="M1 4.5L4 8l5-7.5" fill="none" stroke="#222" strokeWidth="2" /></svg>
        </CheckWrap>
        use loaded types
      </CheckLabel>
      <SelectField label="Placement method" value={choices[0]} w={232}>
        <Popup>
          {choices.map((choice, i) => (
            <PopupItem key={choice} $active={i === 0 && accent}>{choice}</PopupItem>
          ))}
        </Popup>
      </SelectField>
    </DialogOptions>
    <TypeBox>
      <TypeList>
        {types.map((type, i) => <TypeItem key={type} $first={i === 0}>{type}</TypeItem>)}
      </TypeList>
      {scroll && <ListScroll><span /><Chevron size={9} color="#999" /></ListScroll>}
    </TypeBox>
    <DialogButtons>
      <DialogButton type="submit">OK</DialogButton>
      <DialogButton type="button">Cancel</DialogButton>
    </DialogButtons>
  </DialogBox>
);

const PropertyRow = ({ label, value, kind }) => (
  <tr>
    <Cell $label $off={kind === "off"}>{label}</Cell>
    <Cell $off={kind === "off"} $tight={kind === "button"} $focus={kind === "focus"}>
      {kind === "button" && <CellButton>{value}</CellButton>}
      {kind === "check" && <CellCheck type="checkbox" aria-label={label} />}
      {kind !== "button" && kind !== "check" && value}
    </Cell>
    <Cell $tight>{(kind === "focus" || kind === "more") && <CellButton aria-label="Browse" />}</Cell>
  </tr>
);

const QuickTools = () => (
  <QuickAccess>
    <RevitLogo width={19} height={22} />
    <QuickButton $w={29} aria-label="Properties"><QuickIcon name="ui" /></QuickButton>
    <QuickButton $w={27} aria-label="Open"><QuickIcon name="open" /></QuickButton>
    <QuickButton aria-label="Save"><QuickIcon name="save" /></QuickButton>
    <QuickButton aria-label="Synchronize"><QuickIcon name="sync" /></QuickButton>
    <QuickButton $w={10} aria-label="Synchronize options"><Caret /></QuickButton>
    <QuickButton $w={27} aria-label="Undo"><QuickIcon name="undo" /></QuickButton>
    <QuickButton $w={9} aria-label="Undo list"><Caret color="#777" /></QuickButton>
    <QuickButton $w={27} aria-label="Redo"><QuickIcon name="redo" /></QuickButton>
    <QuickButton $w={9} aria-label="Redo list"><Caret color="#777" /></QuickButton>
    <QuickButton $w={27} aria-label="Print"><QuickIcon name="print" /></QuickButton>
    <QuickButton $w={22} aria-label="Export PDF"><QuickIcon name="pdf" /></QuickButton>
    <QuickDivider />
    <QuickButton $w={26} aria-label="Align"><QuickIcon name="align" /></QuickButton>
    <QuickDivider />
    <QuickButton $w={24} aria-label="Measure"><QuickIcon name="measure" /></QuickButton>
    <QuickButton $w={9} aria-label="Measure options"><Caret /></QuickButton>
    <QuickButton $w={28} aria-label="Dimension"><QuickIcon name="dim" /></QuickButton>
    <QuickButton $w={22} aria-label="Tag"><QuickIcon name="tag" /></QuickButton>
    <QuickButton aria-label="Text"><QuickIcon name="text" /></QuickButton>
    <QuickDivider />
    <QuickButton $w={25} aria-label="3D view"><QuickIcon name="home" /></QuickButton>
    <QuickButton $w={9} aria-label="3D view options"><Caret /></QuickButton>
    <QuickButton $w={25} aria-label="Section"><QuickIcon name="section" /></QuickButton>
    <QuickButton $active aria-label="Thin lines"><QuickIcon name="thin" /></QuickButton>
    <QuickDivider />
    <QuickButton $w={26} aria-label="Close inactive"><QuickIcon name="hidden" /></QuickButton>
    <QuickButton $w={22} aria-label="Switch windows"><QuickIcon name="windows" /></QuickButton>
    <QuickButton $w={9} aria-label="Window list"><Caret /></QuickButton>
    <QuickButton $w={22} aria-label="Customize"><BarCaret /></QuickButton>
  </QuickAccess>
);

const UserTools = () => (
  <UserArea>
    <UserItem $w={14} aria-label="Collapse search"><svg width="5" height="8" viewBox="0 0 5 8"><path d="M5 0v8L0 4z" fill="#444" /></svg></UserItem>
    <UserItem $w={24} aria-label="Search">
      <svg width="16" height="16" viewBox="0 0 16 16" stroke="#333" fill="#e6e6e6"><path d="M3 1.5h3l1 5v9H1v-8zM10 1.5h3l2 6v8H9v-9zM7 5h2v4H7zM1 11h6M9 11h6" /></svg>
    </UserItem>
    <UserItem $w={106}>
      <svg width="17" height="17" viewBox="0 0 17 17" stroke="#1c2c5c" fill="#5b8def"><path d="M8.5 1c5 0 4 7 1.5 9v2l6 2v2.5H1V14l6-2v-2C4.5 8 3.5 1 8.5 1z" /></svg>
      infoXJJTQ
    </UserItem>
    <UserItem $w={16} aria-label="Account menu"><Caret /></UserItem>
    <UserItem $w={25} aria-label="Store">
      <svg width="17" height="16" viewBox="0 0 17 16" stroke="#33415e" fill="#b9c9e6" strokeWidth="1.3"><path d="M0 1.5h3l2 9h9M4 4h12l-2 5H5" /><circle cx="6" cy="14" r="1.2" /><circle cx="13" cy="14" r="1.2" /></svg>
    </UserItem>
    <QuickDivider $gap={1} />
    <UserItem $w={24} $align="flex-end" aria-label="Help">
      <svg width="17" height="17" viewBox="0 0 17 17"><circle cx="8.5" cy="8.5" r="7.5" fill="#fff" stroke="#333" /><text x="8.5" y="13" textAnchor="middle" fontSize="12" fontWeight="bold" fill="#2450b0">?</text></svg>
    </UserItem>
    <UserItem $w={74} aria-label="Help menu"><svg width="12" height="6" viewBox="0 0 12 6"><path d="M5 1h6L8 5z" fill="#444" /></svg></UserItem>
    <UserItem $w={23} aria-label="Minimize"><svg width="9" height="12" viewBox="0 0 9 12"><path d="M0 10.5h8" stroke="#333" strokeWidth="2" /></svg></UserItem>
    <UserItem $w={26} aria-label="Restore"><svg width="13" height="12" viewBox="0 0 13 12" fill="none" stroke="#333"><path d="M4 4V.5h8.5V6H9M.5 5.5H9V11H.5z" /><path d="M4 1.5h8.5M.5 6H9" strokeWidth="1.5" /></svg></UserItem>
    <UserItem $w={13} aria-label="Close"><Cross width={2} color="#333" /></UserItem>
  </UserArea>
);

const RibbonTool = ({ tool: [icon, label, w, caret] }) => (
  <Tool $w={w}>
    <RibbonIcon name={icon} />
    <ToolLabel>{label}</ToolLabel>
    {caret === "down" && <Caret size={5} color="#777" />}
    {caret === "side" && <SideCaret><Caret size={5} color="#777" /></SideCaret>}
  </Tool>
);

const PropertiesPalette = () => (
  <Palette $w={315}>
    <PaletteTitle>Properties</PaletteTitle>
    <TypeSelector>
      <TypePreview><SheetsIcon /></TypePreview>
      <TypeName>Floor Plan<br />Grundriss</TypeName>
      <Caret size={8} />
    </TypeSelector>
    <InstanceRow>
      <SelectField label="Instance" value="Floor Plan: Ebene 0" w={228} kind="plain" right={4} />
      <EditType>
        <svg width="16" height="17" viewBox="0 0 16 17" stroke="#3b4252" fill="#e8ebf0"><path d="M1.5 2l2-1.5h3v6h-5zM9 .5h5v6H9zM.5 9h6v6h-6z" /><path d="M8.5 7.5h7v9h-7z" fill="#fff" /><path d="M10 10h4" stroke="#2f6fb5" strokeWidth="2" /><path d="M10 13h4M10 15h4" strokeDasharray="1 1" /></svg>
        Edit Type
      </EditType>
    </InstanceRow>
    <PropertyScroll>
      <PropertyTable>
        <colgroup><col width="150" /><col width="148" /><col /></colgroup>
        {propertyGroups.map(([group, rows]) => (
          <tbody key={group}>
            <tr>
              <GroupHead colSpan={3}>
                <div>
                  {group}
                  <svg width="6" height="9" viewBox="0 0 6 9"><path d="M.5 4L3 1.2 5.5 4M.5 8L3 5.2 5.5 8" fill="none" stroke="#111" strokeWidth="1.3" /></svg>
                </div>
              </GroupHead>
            </tr>
            {rows.map(([label, value, kind], i) => <PropertyRow key={i} label={label} value={value} kind={kind} />)}
          </tbody>
        ))}
      </PropertyTable>
    </PropertyScroll>
    <PaletteFooter>
      <a href="#help">Properties help</a>
      <ApplyButton disabled>Apply</ApplyButton>
    </PaletteFooter>
  </Palette>
);

const PickArrow = () => (
  <SideIcon aria-label="Pick from model">
    <svg width="11" height="12" viewBox="0 0 11 12"><path d="M1 8V1h7M1 1l9 10" fill="none" stroke="#222" strokeWidth="1.5" /></svg>
  </SideIcon>
);

const ResourceLoader = () => (
  <Palette $w={316}>
    <PaletteTitle $pad={4}>Resource Loader</PaletteTitle>
    <LoaderBody>
      <LoaderRow>
        <SearchBox>
          <input type="text" placeholder="Search Text (at least 3 chars)" aria-label="Search Text" />
          <Cross size={12} width={1.9} />
        </SearchBox>
        <SideIcon aria-label="Settings">
          <svg width="17" height="17" viewBox="0 0 17 17"><circle cx="8.5" cy="8.5" r="4.5" fill="none" stroke="#222" strokeWidth="2.8" /><circle cx="8.5" cy="8.5" r="7" fill="none" stroke="#222" strokeWidth="2.6" strokeDasharray="2.75 2.75" /></svg>
        </SideIcon>
      </LoaderRow>
      <LoaderRow $gap={5}>
        <SelectField label="Category" value="Walls" grow />
        <PickArrow />
      </LoaderRow>
      <LoaderRow>
        <SelectField label="Grouping" value="Wall grouped english" grow />
        <PickArrow />
      </LoaderRow>
      <GroupBox>
        <GroupList>
          {wallGroups.map((name) => <GroupItem key={name}>{name}</GroupItem>)}
        </GroupList>
      </GroupBox>
      <FavouriteList>
        {favourites.map(([name, path]) => (
          <FavouriteItem key={name}>{name}<p>{path}</p></FavouriteItem>
        ))}
      </FavouriteList>
    </LoaderBody>
  </Palette>
);

const PlanLines = () => (
  <Drawing width="100%" height="100%" fill="none">
    <g stroke="#a00000">
      <path d="M300.5 246v30M300.5 930v29M283 943.5h40M1342 943.5h40" />
      <path d="M300.5 669v235" strokeDasharray="26 26" />
      <path d="M349 943.5h980" strokeDasharray="26 26.26" />
    </g>
    <g stroke="#5050b0">
      <path d="M444.5 400v382M544.5 561v221M500 584.5h100M411 750.5h180" />
      <circle cx="445" cy="787" r="5" /><circle cx="545" cy="787" r="5" />
      <circle cx="545" cy="556" r="5" /><circle cx="405.5" cy="750.5" r="5" />
      <path d="M445 785v4M545 785v4M545 554v4M405.5 748.5v4" strokeWidth=".8" />
    </g>
    <path d="M868 96h6v1h-6zM868 100h7l-3.5 5zM869 1048h4v1h-4zM867 1059h8l-4-6z" fill="#111" />
  </Drawing>
);

const Navigation = () => (
  <NavigationBar>
    <svg width="31" height="114" viewBox="0 0 31 114" fill="none" stroke="#aaa">
      <circle cx="25" cy="5" r="3.5" /><path d="M23.5 3.5l3 3M26.5 3.5l-3 3" />
      <path d="M4 28c0-6 4-9 10-9h8v11c0 6-3 8-8 8-6 0-10-4-10-10z" fill="#ececec" />
      <circle cx="13" cy="28" r="5" fill="#fafafa" /><path d="M9 32l-3 3M17 32l3 3" />
      <text x="15" y="41" stroke="none" fill="#6d96c4" fontSize="9" fontWeight="bold">2D</text>
      <path d="M13 49h6l-3 3z" fill="#888" stroke="none" />
      <path d="M3 56.5h25" />
      <path d="M8.5 65.5h10v11h-10z" fill="#b7d7a3" stroke="#8cb079" />
      <circle cx="18" cy="74" r="3.5" fill="#f6f6f6" /><path d="M20.5 77l3 4" strokeWidth="2" />
      <path d="M13 91h6l-3 3z" fill="#888" stroke="none" />
      <circle cx="25" cy="107" r="3.5" /><path d="M23 106h4M23 108h4" />
    </svg>
  </NavigationBar>
);

const DrawingView = () => (
  <ViewColumn>
    <ViewTabs>
      <ViewTab>
        <SmallSheetsIcon />
        <span>Ebene 0</span>
        <button aria-label="Close view"><Cross size={9} width={1.8} /></button>
      </ViewTab>
      <button aria-label="View list"><BarCaret /></button>
    </ViewTabs>
    <ViewBody>
      <Canvas>
        <PlanLines />
        <Banner>Different placement methods for every supported system family.</Banner>
        <DialogFrame $x={43} $y={283}>
          <Dialog
            title="Sandwich"
            accent="cyan"
            choices={["Wall: Structural", "Wall: Architectural", "Wall by Face"]}
            types={sandwichTypes([40, 60, 80, 100, 120, 140, 160, 200])}
          />
        </DialogFrame>
        <DialogFrame $x={578} $y={390} $pad="5px 5px 6px 7px">
          <Dialog
            title="Reinforced Concrete"
            accent="blue"
            choices={["Floor: Structural", "Floor: Architectural", "Floor by Face"]}
            types={concreteTypes}
            scroll
          />
        </DialogFrame>
        <DialogFrame $x={1109} $y={499} $pad="10px 4px 5px 11px">
          <Dialog
            title="Sandwich"
            accent="blue"
            choices={["Roof by Footprint", "Roof by Extrusion", "Roof by Face"]}
            types={sandwichTypes([30, 40, 60, 80, 100, 120, 140, 150, 160])}
          />
        </DialogFrame>
        <Navigation />
      </Canvas>
      <VerticalScroll><span /></VerticalScroll>
    </ViewBody>
    <ViewControls>
      <ScaleButton>1 : 50</ScaleButton>
      <ViewIcons>
        {Object.keys(viewArt).map((name) => (
          <button key={name} aria-label={name}>
            <svg width="16" height="16" viewBox="0 0 16 16" stroke="#444">{viewArt[name]}</svg>
          </button>
        ))}
      </ViewIcons>
      <HorizontalScroll><span /></HorizontalScroll>
      <svg width="9" height="9" viewBox="0 0 9 9" fill="#aaa"><path d="M7 0h2v2H7zM7 3.5h2v2H7zM3.5 3.5h2v2h-2zM7 7h2v2H7zM3.5 7h2v2h-2zM0 7h2v2H0z" /></svg>
    </ViewControls>
  </ViewColumn>
);

const ProjectBrowser = () => (
  <Browser>
    <PaletteTitle $pad={4}>Project Browser - Projekt1.rvt</PaletteTitle>
    <Tree>
      {browserTree.map((node, i) => (
        <li key={node.label}>
          <TreeRow>
            <button aria-label={`Toggle ${node.label}`}>
              <RootGutter open={node.open} leaf={node.leaf} first={i === 0} last={i === browserTree.length - 1} />
            </button>
            <svg width="16" height="16" viewBox="0 0 16 16" fill="none" stroke="#3b4252">{treeArt[node.icon]}</svg>
            <TreeLabel $root $selected={node.selected}>{node.label}</TreeLabel>
          </TreeRow>
          {node.items && (
            <ul>
              {node.items.map((item, j) => (
                <TreeRow as="li" key={item}>
                  <ChildGutter expandable={item.startsWith("+")} last={j === node.items.length - 1} />
                  <TreeLabel>{item.replace("+", "")}</TreeLabel>
                </TreeRow>
              ))}
            </ul>
          )}
        </li>
      ))}
    </Tree>
  </Browser>
);

const StatusIcon = ({ name }) => (
  <svg width="16" height="16" viewBox="0 0 16 16" fill="#999" stroke="#929292">{statusArt[name]}</svg>
);

const Status = () => (
  <StatusBar>
    <StatusText>Click to select, TAB for alternates, CTRL adds, SHIFT unselects.</StatusText>
    <StatusGroup>
      <StatusIcon name="people" />
      <SelectField label="Active workset" value="" w={205} kind="status" right={4} />
      <StatusGroup $gap={4}><StatusIcon name="pick" />:0</StatusGroup>
      <StatusGroup $gap={10} $before={16}><StatusIcon name="option" /><StatusIcon name="optionPick" /></StatusGroup>
      <SelectField label="Design option" value="Main Model" w={205} kind="status" right={4} />
    </StatusGroup>
    <StatusSpace />
    <StatusGroup $gap={10}>
      {["link", "underlay", "pinned", "face", "drag", "gear"].map((name) => <StatusIcon key={name} name={name} />)}
      <StatusGroup $gap={1}>
        <svg width="17" height="16" viewBox="0 0 17 16"><path d="M1 1h15l-6 7v7l-3-2V8z" fill="#b5c0cc" stroke="#47515e" /></svg>
        :0
      </StatusGroup>
    </StatusGroup>
  </StatusBar>
);

const App = () => (
  <Shell>
    <GlobalStyle />
    <TitleBar>
      <QuickTools />
      <DocTitle>Autodesk Revit 2023 - Projekt1.rvt - Floor Plan: Ebene 0</DocTitle>
      <UserTools />
    </TitleBar>
    <TabRow>
      <Tab $w={45} $kind="file">File</Tab>
      <Tab $w={84} $kind="active">Architecture</Tab>
      {tabs.map(([name, w]) => <Tab key={name} $w={w}>{name}</Tab>)}
      <RibbonToggle aria-label="Minimize ribbon">
        <svg width="15" height="9" viewBox="0 0 15 9"><rect x=".5" y=".5" width="14" height="8" rx="2" fill="#e8e8e8" stroke="#555" /><path d="M4.5 6.5h6l-3-4z" fill="#444" /></svg>
        <Caret size={5} />
      </RibbonToggle>
    </TabRow>
    <Ribbon>
      <RibbonPanel>
        <ModifyButton $w={44}>
          <svg width="30" height="30" viewBox="0 0 30 30"><path d="M9 4l11 11h-5l3 7-3 1-3-7-3 3z" fill="#f0f0f0" stroke="#a5a5a5" /></svg>
          <ToolLabel>Modify</ToolLabel>
        </ModifyButton>
        <PanelTitle>Select <Caret size={8} /></PanelTitle>
      </RibbonPanel>
      {ribbonPanels.map((panel) => (
        <RibbonPanel key={panel.title} $pad={panel.pad} $end={panel.end} $last={panel.last}>
          <Tools>{panel.tools.map((tool) => <RibbonTool key={tool[0]} tool={tool} />)}</Tools>
          <PanelTitle>{panel.title}{panel.menu && <Caret size={8} />}</PanelTitle>
        </RibbonPanel>
      ))}
    </Ribbon>
    <OptionsBar />
    <Workspace>
      <PropertiesPalette />
      <ResourceLoader />
      <DrawingView />
      <ProjectBrowser />
    </Workspace>
    <Status />
  </Shell>
);

export default App;
